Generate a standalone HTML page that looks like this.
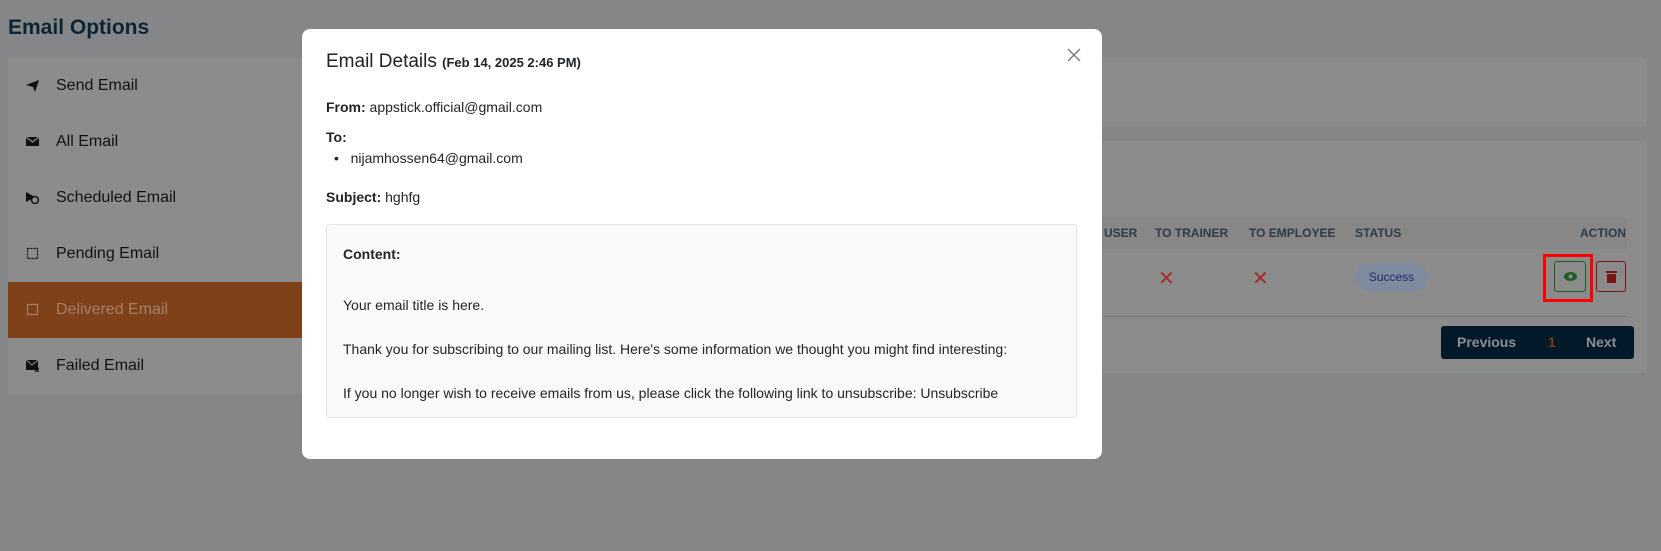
<!DOCTYPE html>
<html><head><meta charset="utf-8"><style>
*{box-sizing:border-box;margin:0;padding:0}
body{width:1661px;height:551px;background:#858687;font-family:"Liberation Sans","DejaVu Sans",sans-serif;position:relative;overflow:hidden}
.abs{position:absolute}
.h1{left:8px;top:16px;font-size:21px;font-weight:bold;color:#0b2536}
.side{left:8px;top:58px;width:400px;height:336px;background:#8c8c8c}
.item{position:absolute;left:0;width:400px;height:56px;font-size:16px;color:#111;display:flex;align-items:center;padding-left:48px}
.item .ic{position:absolute;left:18px;top:21px;width:13px;height:13px}
.panel{background:#8b8b8b;border-radius:3px}
.th{position:absolute;top:226px;font-size:12px;font-weight:bold;color:#2e3a44}
.modal{left:302px;top:29px;width:800px;height:430px;background:#fff;border-radius:8px}
.m{position:absolute;font-size:14px;color:#212529}
b{font-weight:bold}
</style></head><body>
<div class="abs h1">Email Options</div>
<div class="abs side">
 <div class="item" style="top:0"><svg class="ic" viewBox="0 0 13 13"><path d="M0 6 L13 1 L9 13 L7 8 Z" fill="#111"/></svg>Send Email</div>
 <div class="item" style="top:56px"><svg class="ic" viewBox="0 0 13 13"><rect x="0" y="2" width="13" height="9" fill="#111"/><path d="M0 2 L6.5 7 L13 2" stroke="#8c8c8c" fill="none" stroke-width="1.2"/></svg>All Email</div>
 <div class="item" style="top:112px"><svg class="ic" viewBox="0 0 13 13"><path d="M0 1 L9 6 L0 11 Z" fill="#111"/><circle cx="9" cy="9" r="3.5" fill="#8c8c8c" stroke="#111" stroke-width="1.5"/></svg>Scheduled Email</div>
 <div class="item" style="top:168px"><svg class="ic" viewBox="0 0 13 13"><rect x="1.5" y="1.5" width="10" height="10" fill="none" stroke="#111" stroke-width="1.2" stroke-dasharray="2 1"/></svg>Pending Email</div>
 <div class="item" style="top:224px;background:#7f4119;color:#a28069"><svg class="ic" viewBox="0 0 13 13"><rect x="1.5" y="1.5" width="10" height="10" fill="none" stroke="#a28069" stroke-width="1.2"/></svg>Delivered Email</div>
 <div class="item" style="top:280px"><svg class="ic" viewBox="0 0 13 13"><rect x="0" y="1" width="12" height="10" fill="#111"/><path d="M0 1 L6 6 L12 1" stroke="#8c8c8c" fill="none"/><path d="M9 9 L13 13 M13 9 L9 13" stroke="#111" stroke-width="1.3"/></svg>Failed Email</div>
</div>
<div class="abs panel" style="left:420px;top:58px;width:1227px;height:68px"></div>
<div class="abs panel" style="left:420px;top:141px;width:1227px;height:232px"></div>
<div class="abs" style="left:420px;top:217px;width:1207px;height:32px;background:#878787"></div>
<div class="th" style="left:1104px">USER</div>
<div class="th" style="left:1155px">TO TRAINER</div>
<div class="th" style="left:1249px">TO EMPLOYEE</div>
<div class="th" style="left:1355px">STATUS</div>
<div class="th" style="left:1580px">ACTION</div>
<div class="abs" style="left:1158px;top:266px;font-size:20px;color:#a82a2a">✕</div>
<div class="abs" style="left:1252px;top:266px;font-size:20px;color:#a82a2a">✕</div>
<div class="abs" style="left:1355px;top:263px;width:73px;height:28px;border-radius:14px;background:#7e8a9d;color:#1d2c6b;font-size:12px;text-align:center;line-height:28px">Success</div>
<div class="abs" style="left:1543px;top:254px;width:50px;height:48px;border:3px solid #f00"></div>
<div class="abs" style="left:1554px;top:261px;width:32px;height:31px;border:1px solid #1b5e20;border-radius:3px"><svg style="position:absolute;left:9px;top:10px" width="13" height="9" viewBox="0 0 13 9"><ellipse cx="6.5" cy="4.5" rx="6.5" ry="4.5" fill="#1b5e20"/><circle cx="6.5" cy="4.5" r="2" fill="#8b8b8b"/></svg></div>
<div class="abs" style="left:1596px;top:261px;width:30px;height:31px;border:1px solid #7a1515;border-radius:3px"><svg style="position:absolute;left:9px;top:8px" width="11" height="13" viewBox="0 0 11 13"><rect x="0" y="1" width="11" height="2" fill="#7a1515"/><rect x="1" y="4" width="9" height="9" fill="#7a1515"/></svg></div>
<div class="abs" style="left:420px;top:316px;width:1207px;height:1px;background:#7b7b7b"></div>
<div class="abs" style="left:1441px;top:326px;width:193px;height:33px;background:#02192a;border-radius:3px;font-size:14px;font-weight:bold;color:#8a8f94;line-height:33px">
 <span class="abs" style="left:16px">Previous</span><span class="abs" style="left:107px;color:#7f3a14">1</span><span class="abs" style="left:145px">Next</span></div>

<div class="abs modal">
 <div class="m" style="left:24px;top:22px;font-size:19px">Email Details <span style="font-size:13px;font-weight:bold">(Feb 14, 2025 2:46 PM)</span></div>
 <svg class="abs" style="left:765px;top:19px" width="14" height="14" viewBox="0 0 14 14"><path d="M1 1L13 13M13 1L1 13" stroke="#777" stroke-width="1.3"/></svg>
 <div class="m" style="left:24px;top:70px"><b>From:</b> appstick.official@gmail.com</div>
 <div class="m" style="left:24px;top:100px"><b>To:</b></div>
 <div class="m" style="left:32px;top:121px">•&nbsp;&nbsp;&nbsp;nijamhossen64@gmail.com</div>
 <div class="m" style="left:24px;top:160px"><b>Subject:</b> hghfg</div>
 <div class="abs" style="left:24px;top:195px;width:751px;height:194px;background:#f8f9fa;border:1px solid #e3e5e8;border-radius:4px">
  <div class="m" style="left:16px;top:21px"><b>Content:</b></div>
  <div class="m" style="left:16px;top:72px">Your email title is here.</div>
  <div class="m" style="left:16px;top:116px">Thank you for subscribing to our mailing list. Here's some information we thought you might find interesting:</div>
  <div class="m" style="left:16px;top:160px">If you no longer wish to receive emails from us, please click the following link to unsubscribe: Unsubscribe</div>
 </div>
</div>
</body></html>
